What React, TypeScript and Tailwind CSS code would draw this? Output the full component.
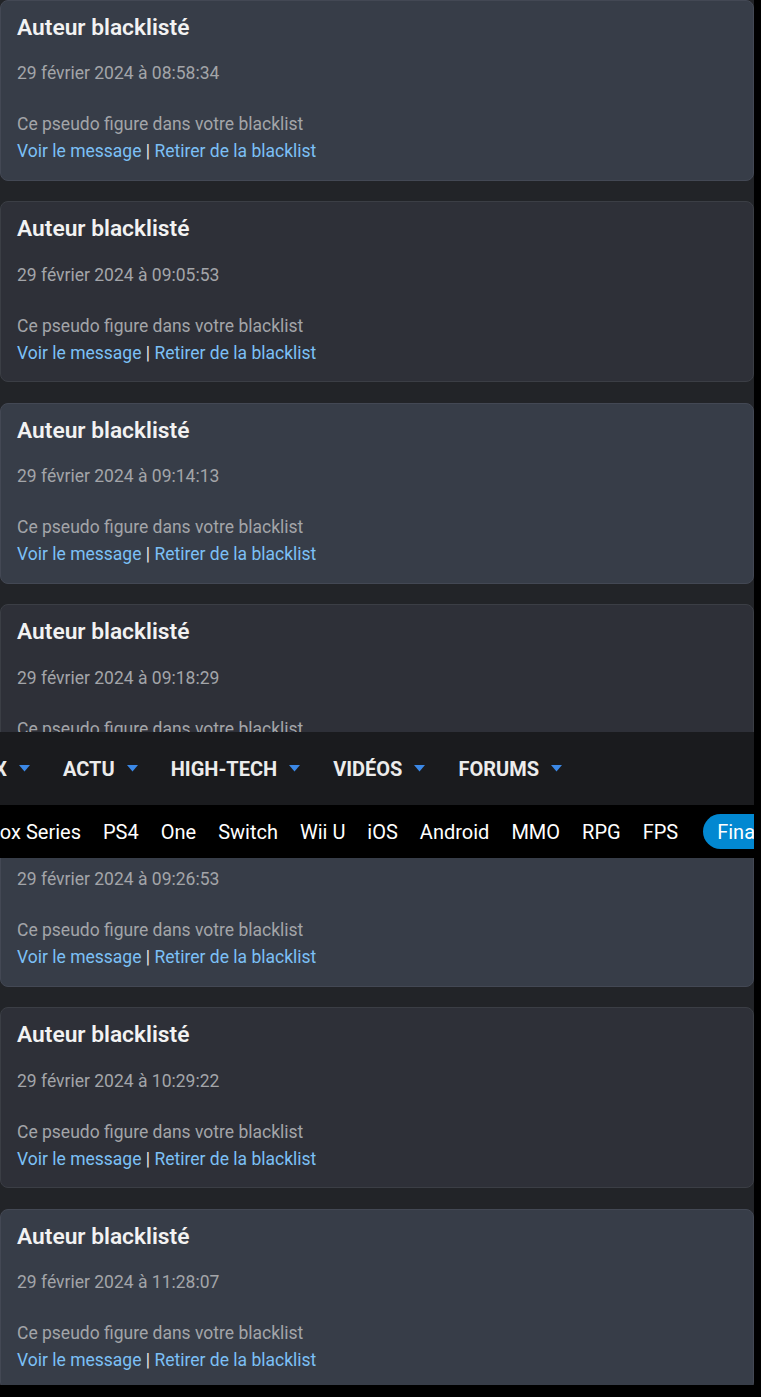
import React from "react";

const dates = [
  "29 février 2024 à 08:58:34",
  "29 février 2024 à 09:05:53",
  "29 février 2024 à 09:14:13",
  "29 février 2024 à 09:18:29",
  "29 février 2024 à 09:26:53",
  "29 février 2024 à 10:29:22",
  "29 février 2024 à 11:28:07",
];

function Card({ date, odd }: { date: string; odd: boolean }) {
  return (
    <div
      className={
        "h-[181px] shrink-0 rounded-[8px] border px-[16px] pt-[13px] " +
        (odd ? "bg-[#373d48] border-[#434854]" : "bg-[#2e3038] border-[#3b3e45]")
      }
    >
      <div className="text-[22.75px] font-semibold leading-[28px] text-[#f2f2f2]">Auteur blacklisté</div>
      <div className="mt-[19.5px] text-[17.5px] leading-[24px] text-[#a3a5a9]">{date}</div>
      <div className="mt-[26px] text-[17.5px] leading-[27px] text-[#a3a5a9]">Ce pseudo figure dans votre blacklist</div>
      <div className="text-[17.5px] leading-[27px] text-[#e6e6e6]">
        <span className="text-[#7cc0f6]">Voir le message</span> | <span className="text-[#7cc0f6]">Retirer de la blacklist</span>
      </div>
    </div>
  );
}

function Tri() {
  return (
    <svg width="11" height="7" viewBox="0 0 11 7" className="ml-[12px] shrink-0">
      <polygon points="0,0 11,0 5.5,6.5" fill="#3b88e6" />
    </svg>
  );
}

export default function App() {
  const menu = ["ACTU", "HIGH-TECH", "VIDÉOS", "FORUMS"];
  const subs = ["PS4", "One", "Switch", "Wii U", "iOS", "Android", "MMO", "RPG", "FPS"];
  return (
    <div className="w-[761px] h-[1397px] bg-black overflow-hidden" style={{ fontFamily: "Roboto, 'Noto Sans', sans-serif" }}>
      <div className="relative w-[754px] h-[1385px] bg-[#222428] overflow-hidden">
        <div className="flex flex-col gap-[20.5px] mt-[-0.5px]">
          {dates.map((d, i) => (
            <Card key={i} date={d} odd={i % 2 === 0} />
          ))}
        </div>
        <div className="absolute left-0 top-[732px] w-[754px]">
          <div className="h-[73px] bg-[#1a1b1e] flex items-center text-[20px] font-bold text-[#ececec] whitespace-nowrap">
            <span className="w-[7px] shrink-0 overflow-hidden flex justify-end">JEUX</span>
            <Tri />
            {menu.map((m) => (
              <React.Fragment key={m}>
                <span className="ml-[33px] shrink-0">{m}</span>
                <Tri />
              </React.Fragment>
            ))}
          </div>
          <div className="h-[53px] bg-black flex items-center text-[20px] text-white whitespace-nowrap overflow-hidden">
            <span className="w-[81px] shrink-0 overflow-hidden flex justify-end">Xbox Series</span>
            {subs.map((s) => (
              <span key={s} className="ml-[22px] shrink-0">{s}</span>
            ))}
            <span className="ml-[25px] shrink-0 h-[35px] rounded-full bg-[#0288d1] px-[14px] flex items-center">Final Fantasy</span>
          </div>
        </div>
      </div>
    </div>
  );
}
